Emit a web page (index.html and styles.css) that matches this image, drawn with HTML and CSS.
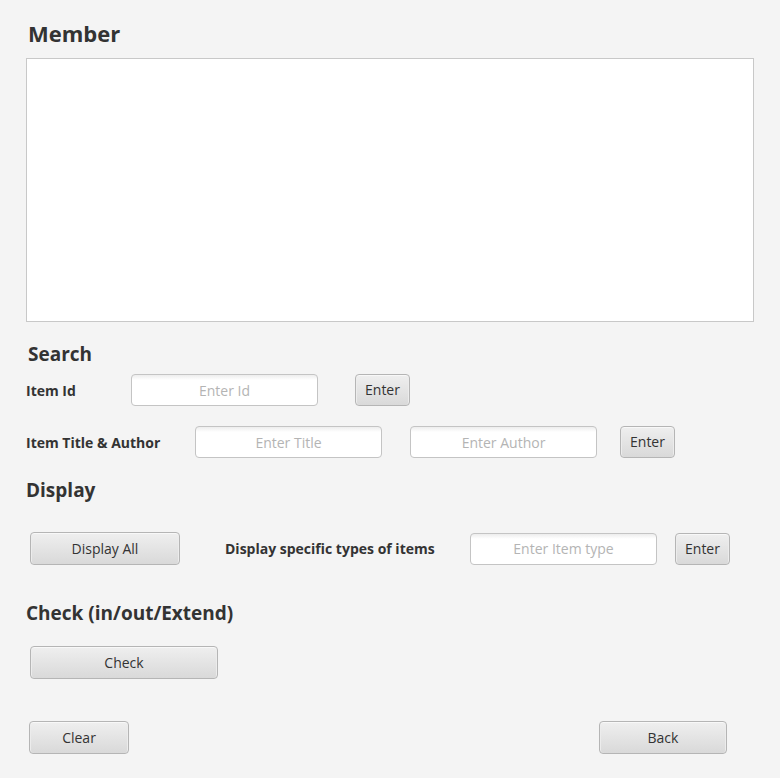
FILE: index.html
```
<!DOCTYPE html>
<html lang="en">
<head>
<meta charset="utf-8">
<title>Member</title>
<link rel="stylesheet" href="styles.css">
</head>
<body>
<main class="page">
  <h1 class="title"><label for="output">Member</label></h1>
  <textarea class="output" id="output" readonly></textarea>

  <section class="search">
    <h2 class="heading heading-inset">Search</h2>
    <form class="row">
      <label class="label label-id" for="item-id">Item Id</label>
      <input class="field" id="item-id" type="text" placeholder="Enter Id">
      <button class="button enter enter-id" type="button">Enter</button>
    </form>
    <form class="row row-title">
      <label class="label label-title" for="item-title">Item Title &amp; Author</label>
      <input class="field" id="item-title" type="text" placeholder="Enter Title">
      <input class="field field-author" type="text" placeholder="Enter Author" aria-label="Author">
      <button class="button enter enter-title" type="button">Enter</button>
    </form>
  </section>

  <section class="display">
    <h2 class="heading">Display</h2>
    <form class="row row-display">
      <button class="button display-all" type="button">Display All</button>
      <label class="label label-type" for="item-type">Display specific types of items</label>
      <input class="field" id="item-type" type="text" placeholder="Enter Item type">
      <button class="button enter enter-type" type="button">Enter</button>
    </form>
  </section>

  <section class="check">
    <h2 class="heading">Check (in/out/Extend)</h2>
    <div class="row row-check">
      <button class="button check-button" type="button">Check</button>
    </div>
  </section>

  <footer class="footer">
    <button class="button clear" type="button">Clear</button>
    <button class="button back" type="button">Back</button>
  </footer>
</main>
</body>
</html>
```
FILE: styles.css
```
* {
  box-sizing: border-box;
}

body {
  margin: 0;
  background: #f4f4f4;
  color: #333;
  font-family: "Segoe UI", "Open Sans", "Noto Sans", sans-serif;
  font-size: 14px;
}

.page {
  padding: 17px 26px 24px;
}

.title {
  margin: 0 0 9px 2px;
  font-size: 22px;
  line-height: 32px;
  font-weight: 700;
}

.output {
  display: block;
  width: 100%;
  height: 264px;
  margin: 0;
  padding: 8px;
  border: 1px solid #c8c8c8;
  outline: 0;
  background: #fff;
  font: inherit;
  color: inherit;
  resize: none;
}

.heading {
  margin: 0;
  font-size: 19px;
  line-height: 24px;
  font-weight: 700;
}

.heading-inset {
  margin-left: 2px;
}

.search,
.display {
  margin-top: 20px;
}

.check {
  margin-top: 36px;
}

.row {
  display: flex;
  align-items: center;
  margin-top: 8px;
}

.row-title {
  margin-top: 20px;
}

.row-display {
  margin-top: 30px;
  padding-left: 4px;
}

.row-check {
  margin-top: 21px;
  padding-left: 4px;
}

.label {
  flex: none;
  font-weight: 700;
  white-space: nowrap;
}

.label-id {
  width: 105px;
}

.label-title {
  width: 169px;
}

.label-type {
  width: 245px;
  margin-left: 45px;
}

.field {
  flex: 0 1 187px;
  width: 187px;
  min-width: 80px;
  height: 32px;
  padding: 0 8px;
  border: 1px solid #c4c4c4;
  border-radius: 4px;
  background: linear-gradient(#ededed, #fff 5px);
  color: #333;
  font: inherit;
  text-align: center;
}

.field::placeholder {
  color: #b4b4b4;
  opacity: 1;
}

.field-author {
  margin-left: 28px;
}

.button {
  flex: none;
  height: 33px;
  padding: 0 0 1px;
  border: 1px solid #b5b5b5;
  border-radius: 4px;
  background: linear-gradient(#efefef, #d9d9d9);
  box-shadow: inset 0 1px #f8f8f8, inset 1px 0 #ececec, inset -1px 0 #ececec;
  color: #333;
  font: inherit;
}

.enter {
  width: 55px;
  height: 32px;
}

.enter-id {
  margin-left: 37px;
}

.enter-title {
  margin-left: 23px;
}

.enter-type {
  margin-left: 18px;
}

.display-all {
  width: 150px;
}

.check-button {
  width: 188px;
}

.footer {
  display: flex;
  justify-content: space-between;
  margin-top: 42px;
  padding: 0 27px 0 3px;
}

.clear {
  width: 100px;
}

.back {
  width: 128px;
}
```
